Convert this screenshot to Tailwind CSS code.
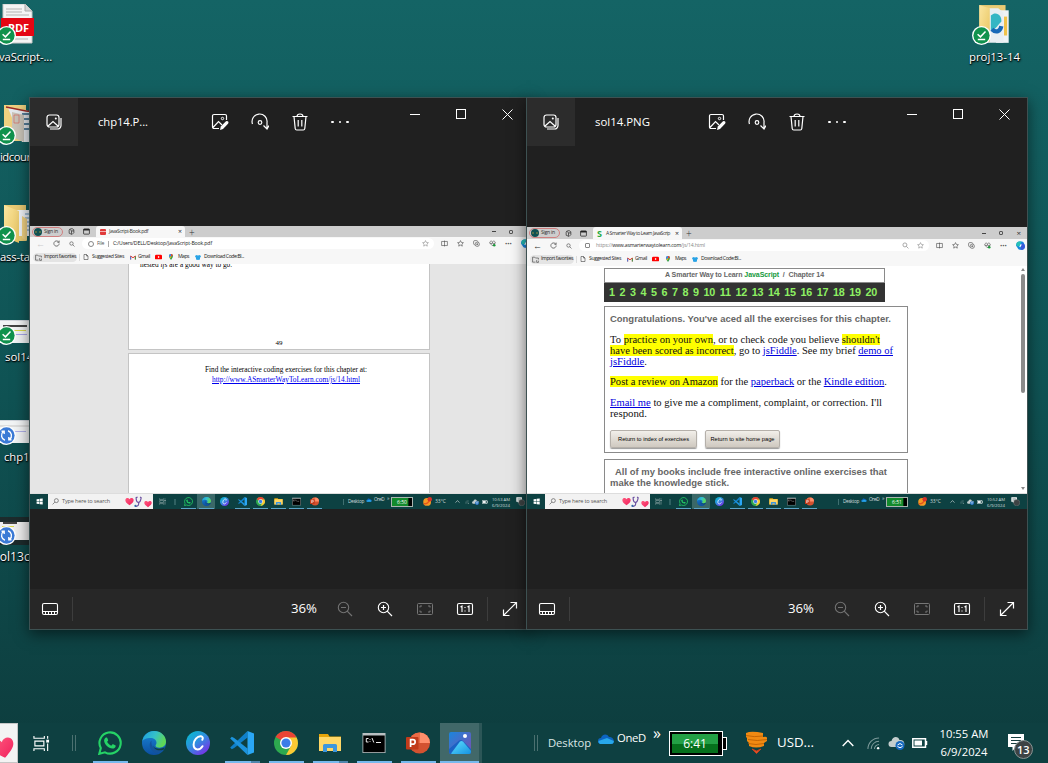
<!DOCTYPE html>
<html lang="en">
<head>
<meta charset="utf-8">
<title>Desktop</title>
<script src="https://cdn.jsdelivr.net/npm/@tailwindcss/browser@4"></script>
</head>
<body class="font-['Open_Sans','Noto_Sans',sans-serif]">
<svg class="absolute h-0 w-0">
  <defs>
    <linearGradient id="gEdge" x1="0" y1="0" x2="1" y2="0.4"><stop offset="0" stop-color="#1b9de2"/><stop offset=".55" stop-color="#35c1c9"/><stop offset="1" stop-color="#5fd856"/></linearGradient>
    <linearGradient id="gEdge2" x1="0" y1="0" x2="0" y2="1"><stop offset="0" stop-color="#1a86d8"/><stop offset="1" stop-color="#0c4fa0"/></linearGradient>
    <linearGradient id="gCanva" x1="0" y1="0" x2=".8" y2="1"><stop offset="0" stop-color="#00c4cc"/><stop offset=".5" stop-color="#2f8fe0"/><stop offset="1" stop-color="#7d2ae8"/></linearGradient>
    <linearGradient id="gPhoto" x1="0" y1="0" x2="1" y2="1"><stop offset="0" stop-color="#1a86dd"/><stop offset="1" stop-color="#7a4fb0"/></linearGradient>
    <linearGradient id="gHill" x1="0" y1="0" x2="1" y2="1"><stop offset="0" stop-color="#5fe0ff"/><stop offset="1" stop-color="#1592e0"/></linearGradient>
    <linearGradient id="gHeart" x1="0" y1="0" x2="1" y2="1"><stop offset="0" stop-color="#ff5a7e"/><stop offset="1" stop-color="#f0205c"/></linearGradient>
    <linearGradient id="gFold" x1="0" y1="0" x2="1" y2="1"><stop offset="0" stop-color="#fbe6a0"/><stop offset="1" stop-color="#e8c45f"/></linearGradient>
  </defs>
  <symbol id="whatsapp" viewBox="0 0 24 24"><path d="M1.3 22.8l1.5-5.7A10.6 10.6 0 1 1 7 21.3z" fill="none" stroke="#25d366" stroke-width="2.1"/><path d="M8.3 6.4c.5 0 .8.1 1 .6l.8 1.9c.1.4 0 .7-.2 1l-.8.9c.9 1.8 2.3 3.1 4.2 3.9l1-1.2c.3-.3.5-.3.9-.2l2 1c.4.2.6.4.5.9-.3 1.6-1.8 2.4-3.2 2.3-4.4-.6-7.600-3.600-8.400-7.600-.1-1.700.9-3.400 2.200-3.500z" fill="#25d366"/></symbol>
  <symbol id="edge" viewBox="0 0 24 24"><circle cx="12" cy="12" r="12" fill="url(#gEdge2)"/><path d="M.3 10.500C1.200 4.500 6 0 12 0c7 0 12 5 12 10.500 0 4-3 6.200-6.500 6.200-2.500 0-4-1-4-2 0-.9 1-1.300 1-3 0-2.600-2.700-4.700-6-4.700C4.500 7 1 8.500.3 10.500z" fill="url(#gEdge)"/><path d="M9.500 9.500C7 11.500 6 19 14 22.500c3.500-.5 6.500-2.500 8.200-5.200-7 3-13.700.2-12.700-7.800z" fill="#14539c"/><path d="M22.800 16.300c-1.500 1-3.800 1.500-6 1.400-4-.1-5.500-2-5.800-3.700.2 3.500 4.500 7 11 4.500z" fill="#0e4040"/></symbol>
  <symbol id="canva" viewBox="0 0 24 24"><circle cx="12" cy="12" r="12" fill="url(#gCanva)"/><path d="M16.300 8.800c.9-1.500.6-3.300-1.300-3.600-3.700-.4-7.400 4-7.400 8.400 0 3 1.600 4.800 4 4.800 2.100 0 3.800-1.300 4.900-3.200" fill="none" stroke="#fff" stroke-width="2" stroke-linecap="round"/></symbol>
  <symbol id="vscode" viewBox="0 0 24 24"><path d="M17.500 0v6.500L4.200 17 1.800 18.200.2 16.500z" fill="#0f7fc9"/><path d="M17.500 24v-6.500L4.200 7 1.800 5.800.2 7.500z" fill="#1c93dd"/><path d="M17.500 0L24 2.500v19L17.500 24z" fill="#2aa7f5"/></symbol>
  <symbol id="chrome" viewBox="0 0 24 24"><circle cx="12" cy="12" r="12" fill="#2da94f"/><path d="M12 12L1.600 6A12 12 0 0 1 22.400 6z" fill="#ea4335"/><path d="M12 6.500h10.600A12 12 0 0 1 12 24l5-9z" fill="#fcc934"/><circle cx="12" cy="12" r="6" fill="#fff"/><circle cx="12" cy="12" r="4.600" fill="#3b7de8"/></symbol>
  <symbol id="explorer" viewBox="0 0 24 24"><path d="M1 3h9l1.500 2.500H23V20H1z" fill="#e5a50a"/><path d="M1 6h22v14H1z" fill="#ffd766"/><path d="M5 21v-6.500q0-1.500 1.500-1.500h11q1.500 0 1.500 1.500V21h-4v-4H9v4z" fill="#3d96dd"/></symbol>
  <symbol id="cmd" viewBox="0 0 24 24"><rect x=".5" y="2" width="23" height="20" fill="#b9c0c2"/><rect x="1.300" y="4.500" width="21.400" height="16.700" fill="#000"/><path d="M6.500 7.500H4.300v3.500h2.200M8 8v.8M8 10v.8M10 7l1.800 4.500M14 11.500h5" stroke="#eee" fill="none"/></symbol>
  <symbol id="ppt" viewBox="0 0 24 24"><circle cx="13.500" cy="12" r="10.500" fill="#d35230"/><path d="M13.500 1.500A10.500 10.500 0 0 1 24 12H13.500z" fill="#ff8f6b"/><path d="M13.500 1.500V12H3a10.500 10.500 0 0 1 10.500-10.500z" fill="#ed6c47"/><rect x="0" y="6" width="12.500" height="12.500" rx="1" fill="#c13b1b"/><path d="M4.600 16V8.700h2.300a2.100 2.100 0 0 1 0 4.500H4.600" fill="none" stroke="#fff" stroke-width="1.700"/></symbol>
  <symbol id="photos" viewBox="0 0 24 24"><rect x="1" y="1" width="22" height="22" rx="2" fill="url(#gPhoto)"/><path d="M1 18l10-8.500q2-1 4 .500L23 18v3q0 2-2 2H3q-2 0-2-2z" fill="#1b62c4"/><path d="M3 22.500l9-12q1.500-1 3 0L23 20q0 3-2 3H4z" fill="url(#gHill)"/><circle cx="17" cy="5" r="2" fill="#fff"/></symbol>
  <symbol id="taskview" viewBox="0 0 18 18"><path d="M1 1v2.500h11V1M1 17v-2.500h11V17M2 6.500h9.500v5H2zM15.500 1v3M15.500 9v8" fill="none" stroke="#fff" stroke-width="1.200"/><rect x="14" y="5" width="3" height="3" fill="#fff"/></symbol>
  <symbol id="cloud" viewBox="0 0 16 12"><path d="M3 11a3 3 0 0 1 0-6C4 1 9 0 11 4c3 0 5 2 4.800 4.500Q15.500 11 13 11z" fill="#0d64c0"/><path d="M2 11q-2-1-1.500-3L9 5l6.800 3Q16 11 13 11z" fill="#28a8ea"/></symbol>
  <symbol id="wifi" viewBox="0 0 14 14"><path d="M1 13A12 12 0 0 1 13 1M4.500 13A8.500 8.500 0 0 1 13 4.500M8 13a5 5 0 0 1 5-5" fill="none" stroke="#7d9a9a" stroke-width="1.100"/><circle cx="12" cy="12" r="1.300" fill="#fff"/></symbol>
  <symbol id="sync" viewBox="0 0 16 14"><path d="M3 11a3 3 0 0 1 0-6C4 0 10 0 11 4c4 0 5 2 4.800 4.500Q15.500 11 13 11z" fill="#c3cdcd"/><circle cx="11.500" cy="9.500" r="4.500" fill="#1569c0"/><path d="M9 9q2.500-3 5 0M14 10.500q-2.500 2.500-5 0" fill="none" stroke="#fff"/></symbol>
  <symbol id="batt" viewBox="0 0 16 10"><path d="M.8.8h12.700v8.400H.8zM14.500 3v4" fill="none" stroke="#fff" stroke-width="1.500"/><rect x="2.500" y="2.500" width="7.500" height="5" fill="#fff"/></symbol>
  <symbol id="notif" viewBox="0 0 26 26"><path d="M1 1h16v13H9l-3.500 4V14H1z" fill="#fff"/><path d="M4 4.500h10M4 7.500h10M4 10.500h7" stroke="#173f40" stroke-width="1"/><circle cx="16.500" cy="16.500" r="9" fill="#3d4344" stroke="#8a9494" stroke-width="1"/></symbol>
  <symbol id="chev" viewBox="0 0 12 8"><path d="M.7 7L6 1.500 11.300 7" fill="none" stroke="#fff" stroke-width="1.400"/></symbol>
  <symbol id="heart" viewBox="0 0 24 24"><path d="M12 22C4 16 0 12 1 7c1-5 8-6 11-1 3-5 10-4 11 1s-3 9-11 15z" fill="url(#gHeart)"/></symbol>
  <symbol id="search" viewBox="0 0 12 12"><circle cx="7.500" cy="4.500" r="3.400" fill="none" stroke="currentColor"/><path d="M5 7L1 11" stroke="currentColor"/></symbol>
  <symbol id="searchR" viewBox="0 0 12 12"><circle cx="5" cy="5" r="3.400" fill="none" stroke="currentColor" stroke-width="1.200"/><path d="M7.500 7.500L11 11" stroke="currentColor" stroke-width="1.200"/></symbol>
  <symbol id="check" viewBox="0 0 18 18"><circle cx="9" cy="9" r="9" fill="#fff"/><circle cx="9" cy="9" r="7.700" fill="#10924d"/><path d="M5.300 7.800L8 10.300l4.800-5M5.500 12.800h7" fill="none" stroke="#fff" stroke-width="1.400"/></symbol>
  <symbol id="syncing" viewBox="0 0 18 18"><circle cx="9" cy="9" r="9" fill="#fff"/><circle cx="9" cy="9" r="7.700" fill="#3b7ad6"/><path d="M7.500 13.500A4.800 4.800 0 0 1 6 5.300M4.300 5h2.500v2.500M10.500 4.500a4.800 4.800 0 0 1 1.500 8.200M13.700 13h-2.500v-2.500" fill="none" stroke="#fff" stroke-width="1.300"/></symbol>
  <symbol id="pdf" viewBox="0 0 36 40"><path d="M3 0h22l7 7v32H3z" fill="#f4f4f4" stroke="#c8c8c8"/><path d="M25 0v7h7" fill="#d5d5d5" stroke="#aaa"/><path d="M6 5h16M6 8h16M6 11h23M6 35h22" stroke="#b4b4b4"/><rect x="1" y="14" width="33" height="18" fill="#e40613"/></symbol>
  <symbol id="folder" viewBox="0 0 36 40"><path d="M4 1h22v36H4z" fill="#e9cb74"/><path d="M14 6h20v26H14z" fill="#f0f4f8"/><path d="M25 10h8M25 14h8M25 18h8M25 22h8M25 26h8" stroke="#8fb0cc" stroke-width="1.500"/><path d="M4 1l15 6v32L4 33z" fill="url(#gFold)"/><path d="M22 12l5 3v22l-5-3z" fill="#f1d384"/></symbol>
  <symbol id="folderDoc" viewBox="0 0 36 40"><path d="M4 1h22v36H4z" fill="#efd180"/><path d="M8 4l28 4v30H22z" fill="#e6eaee"/><path d="M6 3l20 4 10 1" stroke="#9c2b25" stroke-width="1.500" fill="none"/><path d="M22 10h12M24 15h10M24 20h10M24 25h10" stroke="#56809c" stroke-width="2"/><path d="M12 8l12 3v27l-12-5z" fill="#c9c3b8"/><path d="M14 11h5v8h-5z" fill="none" stroke="#d66a5e" stroke-width=".7"/></symbol>
  <symbol id="folderEdge" viewBox="0 0 36 40"><path d="M4 1h25v32H4z" fill="#e9cb74"/><path d="M20 6h12v31H20z" fill="#eef3f6"/><path d="M7 4h15l5 4v29H7z" fill="#e8eef2"/><path d="M4 1l10 3v32L4 33z" fill="url(#gFold)"/><path d="M15 11c5-5 11 0 10 6-3 2-5 8-10 8z" fill="#35b6c4"/><path d="M16 24c4 4 8 2 9-3" fill="none" stroke="#1769b8" stroke-width="4"/><path d="M29 12v18" stroke="#f0c24a" stroke-width="3"/></symbol>
  <symbol id="gal" viewBox="0 0 16 16"><rect x="1" y="1" width="12" height="12" rx="2.500" fill="none" stroke="#fff" stroke-width="1.200"/><path d="M4 15h7.500a3.500 3.500 0 0 0 3.500-3.500V4M2 12l5-4.500 5 4.500" fill="none" stroke="#fff" stroke-width="1.200"/><circle cx="9.800" cy="4.500" r="1" fill="#fff"/></symbol>
  <symbol id="edit" viewBox="0 0 18 18"><path d="M8 15.500H3A1.500 1.500 0 0 1 1.500 14V3A1.500 1.500 0 0 1 3 1.500h11A1.500 1.500 0 0 1 15.500 3v4M2 14.500l5.500-6L11 12" fill="none" stroke="#fff" stroke-width="1.200"/><circle cx="11.500" cy="5.500" r="1.200" fill="none" stroke="#fff"/><path d="M9 17l.8-3.500L15 8.200q1.500-.7 2.300.6.500 1-.3 2L12 16z" fill="#fff"/></symbol>
  <symbol id="rotate" viewBox="0 0 18 18"><path d="M1.500 11A7.500 7.500 0 1 1 16 9.500v6M12.500 12.500l3.500 3.500 2-3.500" fill="none" stroke="#fff" stroke-width="1.200"/><circle cx="9" cy="9.500" r="1.800" fill="none" stroke="#fff" stroke-width="1.200"/></symbol>
  <symbol id="trash" viewBox="0 0 18 18"><path d="M1.500 3.500h15M6 3.500q0-2.500 3-2.500t3 2.500M3 3.500l1.200 12q.2 1.500 1.500 1.500h6.600q1.300 0 1.500-1.500L15 3.500M7.200 7v6.500M10.800 7v6.500" fill="none" stroke="#fff" stroke-width="1.200"/></symbol>
  <symbol id="film" viewBox="0 0 18 14"><rect x="1.500" y="1.500" width="15" height="11" rx="1.500" fill="none" stroke="#fff" stroke-width="1.100"/><path d="M1.500 9.500h15M4.500 9.500v3M7.500 9.500v3M10.500 9.500v3M13.500 9.500v3" stroke="#fff"/></symbol>
  <symbol id="zout" viewBox="0 0 16 16"><circle cx="6.500" cy="6.500" r="5.200" fill="none" stroke="#727272" stroke-width="1.100"/><path d="M4 6.500h5M10.200 10.200L15 15" stroke="#727272" stroke-width="1.200"/></symbol>
  <symbol id="zin" viewBox="0 0 16 16"><circle cx="6.500" cy="6.500" r="5.200" fill="none" stroke="#fff" stroke-width="1.100"/><path d="M4 6.500h5M6.500 4v5M10.200 10.200L15 15" stroke="#fff" stroke-width="1.200"/></symbol>
  <symbol id="fit" viewBox="0 0 18 14"><rect x="1.500" y="1.500" width="15" height="11" rx="1" fill="none" stroke="#767676"/><path d="M4 5.500V4h2M12 4h2v1.500M14 8.500V10h-2M6 10H4V8.500" fill="none" stroke="#767676"/></symbol>
  <symbol id="one" viewBox="0 0 18 14"><rect x="1.500" y="1.500" width="15" height="11" rx="1.500" fill="none" stroke="#fff" stroke-width="1.100"/><path d="M4.500 5L6 4v6M11.500 5L13 4v6M9 5v1M9 8.500v1" fill="none" stroke="#fff" stroke-width="1.100"/></symbol>
  <symbol id="expand" viewBox="0 0 16 16"><path d="M1.500 14.500l13-13M8.500 1.500h6v6M1.500 8.500v6h6" fill="none" stroke="#fff" stroke-width="1.200"/></symbol>
  <symbol id="reload" viewBox="0 0 12 12"><path d="M10.500 6A4.500 4.500 0 1 1 9 2.700L10.300 4M10.500 1v3h-3" fill="none" stroke="#444" stroke-width="1.200"/></symbol>
  <symbol id="star" viewBox="0 0 12 12"><path d="M6 1l1.500 3.200 3.500.4-2.600 2.400.7 3.500L6 8.800l-3.100 1.700.7-3.500L1 4.600l3.500-.4z" fill="none" stroke="currentColor"/></symbol>
  <symbol id="split" viewBox="0 0 12 12"><path d="M1 2.500h10v7H1zM6 1v10" fill="none" stroke="#444"/></symbol>
  <symbol id="coll" viewBox="0 0 12 12"><path d="M3 8.500Q1 8 1 6V3q0-2 2-2h3q2 0 2.500 2" fill="none" stroke="#444"/><circle cx="7.300" cy="7.300" r="3.700" fill="none" stroke="#444"/><path d="M5.500 7.300H9M7.300 5.500V9" stroke="#444"/></symbol>
  <symbol id="hrt" viewBox="0 0 12 12"><path d="M6 10L1.500 5.500Q.5 3 3 2q2-.5 3 1 1-1.500 3-1 2.500 1 1.500 3.500zM2 6h3l1-2 1 3 1-1h2" fill="none" stroke="#444"/><circle cx="9" cy="9" r="2.200" fill="#1d9a3c"/></symbol>
  <symbol id="copilot" viewBox="0 0 12 12"><path d="M4 .5h4q2 0 2.500 2L12 7q0 4-3 4.500H5Q3 11.500 2 9L0 6q0-5 4-5.500z" fill="#1388e0"/><path d="M4 .5h3L5 7H1Q-.5 1 4 .5z" fill="#27c0b5"/><path d="M7 5l1-2 3 1 1 3q0 3-3 4.500H6z" fill="#3b59d8"/><path d="M7 4.500L5 8" stroke="#fff" stroke-width="1.500"/></symbol>
  <symbol id="ws" viewBox="0 0 12 12"><path d="M3 2l4-1 3 2v5l-3 3-5-2V4zM3 2l3 3h4M6 5v5" fill="none" stroke="#333" stroke-width="1.300"/></symbol>
  <symbol id="tabs" viewBox="0 0 12 12"><rect x="1" y="1.500" width="10" height="9" rx="1" fill="none" stroke="#222" stroke-width="1.300"/><path d="M1 3h10" stroke="#222" stroke-width="2.500"/></symbol>
  <symbol id="fav" viewBox="0 0 12 12"><path d="M6 10.500H1V2h3.500L6 3.500h5V6M8 7v4M8 11h3V8" fill="none" stroke="#444" stroke-width="1.100"/></symbol>
  <symbol id="page" viewBox="0 0 12 12"><path d="M2 1h5l3 3v7H2zM7 1v3h3" fill="none" stroke="#333" stroke-width="1.100"/></symbol>
  <symbol id="gmail" viewBox="0 0 12 10"><path d="M1.300 9V2L6 5.500 10.700 2v7" fill="none" stroke="#e0392c" stroke-width="2"/><path d="M1.300 9V3" stroke="#3f7de0" stroke-width="2"/><path d="M10.700 9V3" stroke="#2f9e50" stroke-width="2"/></symbol>
  <symbol id="yt" viewBox="0 0 12 10"><rect y="1" width="12" height="8" rx="2" fill="#f00"/><path d="M5 3l3 2-3 2z" fill="#fff"/></symbol>
  <symbol id="pin" viewBox="0 0 12 12"><path d="M6 12Q2 7 2 4a4 4 0 0 1 8 0q0 3-4 8z" fill="#2f9e50"/><path d="M2 4a4 4 0 0 1 4-4v4L3 7z" fill="#4285f4"/><path d="M6 0a4 4 0 0 1 4 3L6 5z" fill="#ea4335"/><path d="M3 7l3-3 1 2-3 3z" fill="#fbbc05"/></symbol>
  <symbol id="dl" viewBox="0 0 12 10"><path d="M1 1l3-1 2 1.500L8 0l3 1 1 3-2 1v4l-4 1-4-1V5L0 4z" fill="#29a3e6"/></symbol>
  <symbol id="avatar" viewBox="0 0 12 12"><circle cx="6" cy="6" r="6" fill="#0f5052"/><path d="M1.500 6h3M7.500 6h3" stroke="#b8a040" stroke-width="1.200"/></symbol>
  <symbol id="win" viewBox="0 0 12 12"><path d="M1 2.200l4.500-.7v4H1zM6.300 1.400L11.500.7v4.800H6.300zM1 6.300h4.500v4L1 9.700zM6.300 6.300h5.200v5l-5.200-.8z" fill="#fff"/></symbol>
  <symbol id="steth" viewBox="0 0 14 16"><path d="M5 1L3 2q0 6 3 6.500T10 2L8.500 1M6.500 8.500q1 6-4.500 5.500" fill="none" stroke="#6a4fa0" stroke-width="1.700"/><circle cx="2" cy="13.500" r="1.500" fill="#3568a8"/></symbol>
  <symbol id="weather" viewBox="0 0 12 12"><circle cx="5.500" cy="6.500" r="5.200" fill="#f59a23"/><path d="M1 9q5 1 8-5" stroke="#e2571d" stroke-width="2" fill="none"/><circle cx="9" cy="3" r="3" fill="#d8322a"/></symbol>
  <symbol id="coins" viewBox="0 0 24 24"><path d="M1 2q5-2.500 17 0v4q4-1 4 1v3l-3 2v3q-8 3-15 0v-3L2 10V7L1 6z" fill="#f08a12"/><path d="M1 4.500q8 2 17 .5M3 8.500q9 2 19 0M3 12.500q8 2 16 0" fill="none" stroke="#b85c00" stroke-width=".8"/><path d="M7 18l4.500 4.500L16 18l-4.500 2z" fill="#e0532a" stroke="#c8401c"/></symbol>
</svg>

<main id="desk" class="relative h-[763px] w-[1048px] overflow-hidden bg-linear-to-b from-[#146465] via-[#0f5354] via-50% to-[#0d3c3d]"></main>

<script>
const ic = (id, cls) => `<svg class="${cls} shrink-0"><use href="#${id}"/></svg>`;
const t = (w, cls, s) => `<span data-w="${w}" class="inline-block shrink-0 whitespace-nowrap ${cls}">${s}</span>`;

/* Desktop shortcut: picture, status badge, label */
const shortcut = (art, badge, label) => `
  <div class="h-[100px]">
    <div class="relative h-[44px]">${art}
      <div class="absolute -left-[3px] top-[22px]">${ic(badge, 'block size-[19px]')}</div>
    </div>
    <div class="h-[18px] text-[12px] leading-[18px] text-white [text-shadow:1px_1px_2px_#000,0_1px_1px_#000]">${label}</div>
  </div>`;
const thumb = lines => `<div class="h-[23px] w-[44px] bg-[#f2f4f5] pt-[4px] border-t border-gray-300">${lines}</div>`;

/* Browser chrome inside the captured pictures */
const browser = o => `
  <div class="flex ${o.tabH} items-center bg-[#cdcdcd] text-[5.5px] text-[#333]">
    <div class="ml-[2px] flex h-[10px] w-[31px] items-center gap-[2px] rounded-full border border-[#d08080] pl-px">${ic('avatar', 'size-[8px]')}${t(14, '', 'Sign in')}</div>
    ${ic('ws', 'ml-[5px] size-[7px]')}${ic('tabs', 'ml-[8px] size-[7px]')}
    <div class="ml-[6px] flex h-full w-[89px] items-center rounded-t-[3px] bg-[#f7f7f7] pl-[4px]">
      ${o.tabIcon}<div class="ml-[3px] w-[69px]">${o.tabText}</div>
      <span class="text-[7px] leading-none">×</span>
    </div>
    <span class="ml-[4px] text-[10px] font-light leading-none">+</span>
    <div class="ml-auto flex w-[39px] items-center justify-between text-[8px] leading-none ${o.btnR}"><i class="h-px w-[4px] bg-[#444]"></i><i class="size-[4px] rounded-[1px] border border-[#555]"></i><span>×</span></div>
  </div>
  <div class="flex h-[13px] items-center bg-[#f7f7f7] text-[5.5px] text-[#555]">
    <span class="ml-[6px] w-[8px] text-[9px] leading-none ${o.back}">←</span>
    ${ic('reload', 'ml-[9px] size-[7px]')}${ic('searchR', 'ml-[9px] size-[6px] text-[#444]')}
    <div class="ml-[7px] flex h-[11px] ${o.urlW} items-center rounded-full bg-white pl-[6px]">${o.url}<span class="ml-auto mr-[5px] flex gap-[8px] text-[#888]">${o.zoom}${ic('star', 'size-[7px]')}</span></div>
    <div class="ml-[7px] flex items-center gap-[9px]">${ic('split', 'size-[7px]')}${ic('star', 'size-[7px] text-[#444]')}${ic('coll', 'size-[7px]')}${ic('hrt', 'size-[7px]')}<span class="w-[7px] text-[8px] font-bold leading-[4px]">···</span>${ic('copilot', 'size-[9px]')}</div>
  </div>
  <div class="flex h-[14px] items-center bg-[#f7f7f7] text-[5.5px] text-[#222]">
    <div class="ml-[3px] flex h-[9px] w-[44px] items-center gap-[2px] rounded-full bg-[#e4e4e4] pl-[2px]">${ic('fav', 'size-[7px]')}${t(32, '', 'Import favorites')}</div>
    <i class="ml-[2px] h-[7px] w-px bg-[#ddd]"></i>
    ${ic('page', 'ml-[3px] size-[6px]')}${t(32, 'ml-[3px]', 'Suggested Sites')}
    ${ic('gmail', 'ml-[6px] h-[5px] w-[6px]')}${t(12, 'ml-[2px]', 'Gmail')}
    ${ic('yt', 'ml-[5px] h-[6px] w-[7px]')}${ic('pin', 'ml-[6px] size-[6px]')}${t(11, 'ml-[4px]', 'Maps')}
    ${ic('dl', 'ml-[6px] h-[5px] w-[6px]')}${t(40, 'ml-[3px]', 'Download Code:Bl...')}
  </div>`;

/* Taskbar inside the captured pictures */
const app = (id, on) => `<div class="flex h-full w-[18px] flex-col items-center justify-between ${on}">${ic(id, 'mt-[3px] size-[9px]')}<i class="h-px w-[15px] bg-[#5ba5c8]"></i></div>`;
const appNoLine = id => `<div class="flex h-full w-[18px] justify-center">${ic(id, 'mt-[3px] size-[9px]')}</div>`;
const miniBar = o => `
  <div class="flex h-[15px] items-center bg-[#0d4142] text-[5px] text-[#cfdcdc]">
    <div class="flex h-full w-[18px] items-center justify-center">${ic('win', 'size-[7px]')}</div>
    <div class="flex h-full w-[105px] items-center bg-[#f2f2f2] pl-[4px] text-[6px] text-[#555]">${ic('search', 'size-[7px] text-[#444]')}${t(48, 'ml-[3px]', 'Type here to search')}<div class="ml-auto flex items-center">${ic('heart', 'size-[9px]')}${ic('steth', 'h-[14px] w-[10px]')}${ic('heart', 'mr-px mt-[4px] size-[8px]')}</div></div>
    <div class="flex ${o.tvW} justify-center">${ic('taskview', 'size-[7px] opacity-70')}</div>
    <i class="mx-[3px] h-[6px] w-[2px] bg-[#2f6162]"></i>
    <div class="flex h-full">${app('whatsapp', '')}${app('edge', 'bg-[#3a6868]')}${appNoLine('canva')}${app('vscode', '')}${app('chrome', '')}${app('explorer', '')}${app('cmd', '')}${app('ppt', '')}</div>
    <i class="ml-[20px] mr-[4px] h-[6px] w-px bg-[#3f6f70]"></i>
    ${t(16, '', 'Desktop')}${ic('cloud', 'ml-[2px] mb-[3px] h-[4px] w-[6px]')}${t(10, 'ml-[2px] mb-[4px]', 'OneD')}<span class="ml-[3px] mb-[6px] w-[4px]">»</span>
    <div class="h-[10px] w-[22px] border border-[#a9b3ae] bg-linear-to-r from-[#128a2c] from-80% to-black to-85% text-center text-[5px] leading-[8px] text-white">${o.level}</div>
    ${ic('weather', 'ml-[10px] size-[9px]')}${t(11, 'ml-[3px]', '33°C')}
    ${ic('chev', 'ml-[9px] h-[3px] w-[5px]')}${ic('wifi', 'ml-[5px] size-[4px]')}${ic('sync', 'ml-[3px] h-[6px] w-[7px]')}${ic('batt', 'ml-[3px] h-[4px] w-[6px]')}
    <div class="ml-[4px] flex w-[18px] flex-col text-[4.5px] leading-[6px]">${t(18, '', o.time)}${t(18, '', '6/9/2024')}</div>
    ${ic('notif', 'ml-[6px] size-[9px]')}
  </div>`;

const tool = id => `<div class="flex w-[40px] justify-center">${ic(id, 'size-[18px]')}</div>`;
const tool2 = (id, c) => `<div class="flex w-[40px] justify-center">${ic(id, c)}</div>`;

/* Photo viewer window */
const viewer = o => `
  <section class="absolute top-[97px] ${o.x} flex h-[533px] w-[502px] flex-col border border-[#3d5152] bg-[#202020] text-white shadow-[0_4px_14px_rgba(0,0,0,0.55)]">
    <header class="flex h-[48px] shrink-0 items-center">
      <div class="flex size-[48px] items-center justify-center bg-[#2c2c2c]">${ic('gal', 'size-[16px]')}</div>
      <div class="ml-[20px] flex w-[102px] text-[12px]">${o.title}</div>
      ${tool('edit')}${tool('rotate')}${tool('trash')}
      <div class="flex w-[40px] justify-center gap-[5px]"><i class="size-[2.5px] rounded-full bg-white"></i><i class="size-[2.5px] rounded-full bg-white"></i><i class="size-[2.5px] rounded-full bg-white"></i></div>
      <div class="ml-[32px] flex h-[32px] self-start">
        <div class="flex w-[46px] items-center justify-center"><i class="mt-px h-px w-[10px] bg-white"></i></div>
        <div class="flex w-[46px] items-center justify-center"><i class="size-[10px] border border-white"></i></div>
        <div class="flex w-[46px] items-center justify-center"><svg class="size-[11px]" viewBox="0 0 11 11"><path d="M.5.5l10 10M10.500.5l-10 10" stroke="#fff"/></svg></div>
      </div>
    </header>
    <div class="${o.top} h-[283px] shrink-0 overflow-hidden text-black">${o.shot}</div>
    <footer class="mt-auto flex h-[40px] shrink-0 items-center bg-[#272727]">
      ${tool2('film', 'h-[14px] w-[18px]')}
      <i class="ml-[2px] h-[24px] w-px bg-[#3d3d3d]"></i>
      <div class="ml-[218px] flex w-[34px] text-[14px]">${t(26, '', '36%')}</div>
      ${tool2('zout', 'size-[16px]')}${tool2('zin', 'size-[16px]')}${tool2('fit', 'h-[14px] w-[18px]')}${tool2('one', 'h-[14px] w-[18px]')}
      <i class="ml-[2px] h-[24px] w-px bg-[#3d3d3d]"></i>
      <div class="ml-[2px]">${tool2('expand', 'size-[16px]')}</div>
    </footer>
  </section>`;

const shot1 = browser({
  tabH: 'h-[11px]', btnR: '-mr-px', back: 'text-[#ccc]', urlW: 'w-[352px]', zoom: '',
  tabIcon: '<i class="flex h-[6px] w-[6px] items-center rounded-[1px] bg-[#e03a3a]"><b class="h-px w-full bg-white/60"></b></i>',
  tabText: t(39, 'block', 'JavaScript-Book.pdf'),
  url: `<i class="size-[6px] rounded-full border border-[#888]"></i>${t(7, 'ml-[3px]', 'File')}<i class="mx-[4px] h-[6px] w-px bg-[#aaa]"></i>${t(99, 'text-[#222]', 'C:/Users/DELL/Desktop/JavaScript-Book.pdf')}`
}) + `
  <div class="h-[230px] overflow-hidden border-b border-[#ddd] bg-[#e5e5e5] pl-[98px] font-['Liberation_Serif',serif] text-[7px] leading-[9px]">
    <div class="h-[86px] w-[302px] overflow-hidden border border-t-0 border-[#c4c4c4] bg-white">
      <div class="-mt-[3px] ml-[11px] flex h-[9px]">${t(92, '', 'nested <i>if</i>s are a good way to go.')}</div>
      <div class="mt-[69px] text-center">49</div>
    </div>
    <div class="mt-[3px] flex h-[150px] w-[302px] flex-col border border-[#c4c4c4] bg-white pt-[12px]">
      <div class="ml-[76px] flex h-[9px]">${t(162, '', 'Find the interactive coding exercises for this chapter at:')}</div>
      <div class="ml-[83px] flex h-[9px]">${t(148, 'text-[#0000ee] underline', 'http://www.ASmarterWayToLearn.com/js/14.html')}</div>
    </div>
  </div>` + miniBar({ tvW: 'w-[18px]', level: '6:50', time: '10:53 AM' });

const link = s => `<span class="text-[#0000dd] underline">${s}</span>`;
const mark = s => `<span class="bg-[#ffff00]">${s}</span>`;
const line = (w, s) => `<div class="flex h-[11px]">${t(w, '', s)}</div>`;
const btn = (w, tw, s) => `<div class="flex h-[18px] ${w} items-center justify-center rounded-[2px] border border-[#b5b0aa] bg-linear-to-b from-[#f2efea] to-[#cfc9c0] font-['Liberation_Sans',sans-serif] text-[6px] text-black shadow-[0_1px_1px_#999]">${t(tw, '', s)}</div>`;
const shot2 = browser({
  tabH: 'h-[12px]', btnR: 'mr-[6px]', back: 'text-[#333]', urlW: 'w-[350px]', zoom: ic('searchR', 'size-[7px]'),
  tabIcon: '<b class="w-[6px] text-[9px] leading-none text-[#1faa3c]">S</b>',
  tabText: t(64, 'block', 'A Smarter Way to Learn JavaScrip'),
  url: `<i class="h-[5px] w-[5px] rounded-[1px] border border-[#888]"></i>${t(109, 'ml-[6px] text-[#888]', 'https://<span class="text-[#222]">www.asmarterwaytolearn.com</span>/js/14.html')}`
}) + `
  <div class="flex h-[228px] overflow-hidden border-b border-[#ddd] bg-white pl-[77px]">
    <div class="w-[304px] shrink-0 pt-[2px] font-['Liberation_Sans',sans-serif]">
      <div class="w-[281px]">
        <div class="flex h-[15px] items-center justify-center border border-[#8a8a8a] text-[7.5px] font-bold text-[#666]">${t(159, '', 'A Smarter Way to Learn <span class="text-[#159a3c]">JavaScript</span> &nbsp;/&nbsp; Chapter 14')}</div>
        <div class="flex h-[19px] items-center bg-[#333] pl-[5px] text-[11.5px] font-bold text-[#8ef063]">${t(268, '[word-spacing:2px]', '1 2 3 4 5 6 7 8 9 10 11 12 13 14 15 16 17 18 19 20')}</div>
      </div>
      <div class="mt-[4px] h-[147px] border border-[#8a8a8a] pl-[5px] pt-[5px]">
        <div class="flex h-[14px] text-[9.5px] font-bold leading-[14px] text-[#666]">${t(281, '', 'Congratulations. You\'ve aced all the exercises for this chapter.')}</div>
        <div class="mt-[8px] flex flex-col font-['Liberation_Serif',serif] text-[10px] leading-[11px] text-[#111]">
          ${line(270, `To ${mark('practice on your own')}, or to check code you believe ${mark("shouldn't")}`)}
          ${line(283, `${mark('have been scored as incorrect')}, go to ${link('jsFiddle')}. See my brief ${link('demo of')}`)}
          ${line(37, `${link('jsFiddle')}.`)}
          <div class="mt-[9px]">${line(277, `${mark('Post a review on Amazon')} for the ${link('paperback')} or the ${link('Kindle edition')}.`)}</div>
          <div class="mt-[10px]">${line(272, `${link('Email me')} to give me a compliment, complaint, or correction. I'll`)}${line(37, 'respond.')}</div>
        </div>
        <div class="mt-[11px] flex gap-[8px]">${btn('w-[87px]', 71, 'Return to index of exercises')}${btn('w-[75px]', 64, 'Return to site home page')}</div>
      </div>
      <div class="mt-[6px] h-[60px] border border-[#8a8a8a] pl-[5px] pt-[6px] text-[9.5px] font-bold leading-[11px] text-[#666]">
        <div class="ml-[5px] flex h-[11px]">${t(272, '', 'All of my books include free interactive online exercises that')}</div>
        <div class="flex h-[11px]">${t(119, '', 'make the knowledge stick.')}</div>
      </div>
    </div>
    <div class="ml-auto mr-px flex w-[6px] flex-col items-center pt-[2px]">
      <i class="h-0 w-0 border-x-[2px] border-b-[3px] border-x-transparent border-b-[#888]"></i>
      <i class="mt-[3px] h-[119px] w-[4px] rounded-full bg-[#8b8b8b]"></i>
      <i class="mb-[3px] mt-auto h-0 w-0 border-x-[2px] border-t-[3px] border-x-transparent border-t-[#888]"></i>
    </div>
  </div>` + miniBar({ tvW: 'w-[16px]', level: '6:51', time: '10:52 AM' });

const task = (id, cls, line) => `<div class="flex h-[40px] w-[44px] flex-col items-center justify-between">${ic(id, 'mt-[8px] ' + cls)}${line}</div>`;
const bar = '<i class="h-[2px] w-[35px] bg-[#76b9ed]"></i>';
const bar2 = '<i class="flex h-[2px] w-[35px] bg-[#4f86ad]"><b class="h-full w-[26px] bg-[#76b9ed]"></b></i>';
const rails = '<div class="flex gap-[2px]"><i class="h-[16px] w-px bg-[#4b7070]"></i><i class="h-[16px] w-px bg-[#4b7070]"></i></div>';

document.getElementById('desk').innerHTML = `
  <div class="absolute left-0 top-[4px] w-[76px]">
    ${shortcut(ic('pdf', 'block h-[40px] w-[36px]') + '<b class="absolute left-[8px] top-[16px] text-[11px] leading-[16px] text-white">PDF</b>', 'check', t(62, '-ml-[10px]', 'JavaScript-...'))}
    ${shortcut(ic('folderDoc', 'block h-[40px] w-[36px]'), 'check', t(62, '-ml-[10px]', 'midcourse-...'))}
    ${shortcut(ic('folder', 'block h-[40px] w-[36px]'), 'check', t(54, '-ml-[8px]', 'class-tasks'))}
    ${shortcut('<div class="pt-[16px]">' + thumb('<i class="ml-[3px] block h-[2px] w-[24px] bg-[#444]"></i><i class="ml-[10px] mt-[3px] block h-px w-[16px] bg-[#d8d84a]"></i><i class="ml-[14px] mt-[3px] block h-px w-[13px] bg-[#a8a8e8]"></i>') + '</div>', 'check', t(55, 'ml-[5px]', 'sol14.PNG'))}
    ${shortcut('<div class="pt-[16px]">' + thumb('<i class="block h-[2px] w-full bg-[#ddd]"></i><i class="ml-[14px] mt-[4px] block h-px w-[12px] bg-[#b0b0e8]"></i>') + '</div>', 'syncing', t(58, 'ml-[4px]', 'chp14.PNG'))}
    ${shortcut('<div class="pt-[13px]"><div class="h-[28px] border-y-[5px] border-[#1d2b2c] bg-[#eee]"><i class="ml-[3px] block h-[2px] w-[14px] bg-[#444]"></i><i class="mt-[2px] ml-[2px] block h-px w-[12px] bg-[#d8d84a]"></i></div></div>', 'syncing', t(60, '-ml-[6px]', 'sol13chp...'))}
  </div>
  <div class="absolute left-[975px] top-[4px] w-[50px]">
    <div class="relative h-[44px]">${ic('folderEdge', 'block h-[42px] w-[38px]')}<div class="absolute -left-[3px] top-[22px]">${ic('check', 'block size-[19px]')}</div></div>
    <div class="-ml-[6px] text-[12px] leading-[18px] text-white [text-shadow:1px_1px_2px_#000,0_1px_1px_#000]">${t(51, '', 'proj13-14')}</div>
  </div>
  ${viewer({ x: 'left-[29px]', title: t(50, '', 'chp14.P...'), top: 'mt-[80px]', shot: shot1 })}
  ${viewer({ x: 'left-[526px]', title: t(55, '', 'sol14.PNG'), top: 'mt-[80px] pt-px', shot: shot2 })}
  <nav class="absolute bottom-0 left-0 flex h-[40px] w-full items-center bg-[#0e4041] text-[12px] text-white">
    <div class="h-full w-[18px] overflow-hidden border border-l-0 border-[#c6c6c6] bg-[#f3f3f3]">${ic('heart', '-ml-[9px] mt-[12px] size-[24px] -rotate-12')}</div>
    ${ic('taskview', 'ml-[15px] size-[17px]')}
    <div class="ml-[22px] w-[16px]">${rails}</div>
    ${task('whatsapp', 'size-[24px]', bar)}${task('edge', 'size-[24px]', '')}${task('canva', 'size-[24px]', '')}${task('vscode', 'size-[24px]', bar2)}${task('chrome', 'size-[24px]', bar)}${task('explorer', 'size-[24px]', bar2)}${task('cmd', 'size-[24px]', bar)}${task('ppt', 'size-[24px]', bar)}
    <div class="flex h-[40px] w-[42px] border-r-[3px] border-[#2c5657] bg-[#416869]"><div class="flex flex-1 flex-col items-center justify-between">${ic('photos', 'mt-[8px] size-[24px]')}<i class="h-[2px] w-full bg-[#76b9ed]"></i></div></div>
    <div class="ml-[52px] w-[14px]">${rails}</div>
    ${t(43, 'text-[#dce6e6]', 'Desktop')}
    ${ic('cloud', 'mb-[9px] ml-[7px] h-[12px] w-[16px]')}
    ${t(29, 'mb-[10px] ml-[3px] mr-[-1px] leading-[16px]', 'OneD')}
    <span class="mb-[20px] ml-[8px] w-[15px] text-[16px] leading-none">»</span>
    <div class="ml-px flex h-[25px] w-[54px] border-2 border-black bg-black outline outline-white -outline-offset-1"><div class="m-px w-[46px] bg-linear-to-b from-[#23a045] from-50% to-[#05701c] to-55% text-center text-[12px] leading-[19px]">6:41</div></div>
    <i class="h-[13px] w-[4px] border border-l-0 border-white bg-black"></i>
    ${ic('coins', 'ml-[18px] size-[24px]')}
    ${t(37, 'ml-[8px] text-[14px]', 'USD...')}
    ${ic('chev', 'ml-[28px] h-[8px] w-[12px]')}${ic('wifi', 'ml-[13px] size-[13px]')}${ic('sync', 'ml-[8px] h-[14px] w-[17px]')}${ic('batt', 'ml-[7px] h-[10px] w-[16px]')}
    <div class="ml-[11px] flex w-[50px] flex-col items-center leading-[18px]">${t(49, '', '10:55 AM')}${t(47, '', '6/9/2024')}</div>
    <div class="relative ml-[18px] mt-[5px]">${ic('notif', 'block size-[26px]')}<span class="absolute left-[10px] top-[9px] text-[11px] font-semibold leading-[15px]">13</span></div>
  </nav>`;

/* Tune size and tracking so each label takes its designed width */
function fit() {
  const els = [...document.querySelectorAll('[data-w]')];
  els.forEach(e => { e.style.letterSpacing = e.style.fontSize = ''; e.style.width = 'max-content'; });
  const m = els.map(e => [e.getBoundingClientRect().width, parseFloat(getComputedStyle(e).fontSize)]);
  els.forEach((e, i) => {
    const w = +e.dataset.w, k = Math.min(1.08, Math.max(0.94, w / m[i][0]));
    e.style.fontSize = m[i][1] * k + 'px';
  });
  const m2 = els.map(e => e.getBoundingClientRect().width);
  els.forEach((e, i) => {
    const w = +e.dataset.w;
    e.style.letterSpacing = (w - m2[i]) / e.textContent.length + 'px';
    e.style.width = w + 'px';
  });
}
fit();
addEventListener('load', fit);
requestAnimationFrame(fit);
[0, 30, 100, 250].forEach(ms => setTimeout(fit, ms));
document.fonts.ready.then(fit);
</script>
</body>
</html>
